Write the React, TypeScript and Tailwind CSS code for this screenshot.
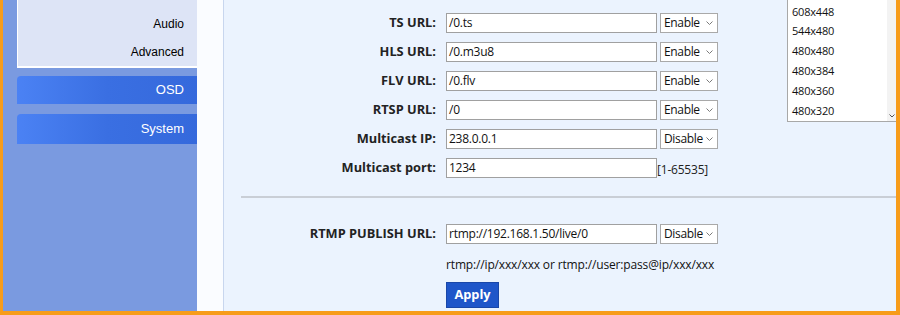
import React from "react";

const font = { fontFamily: '"Open Sans", "Noto Sans", sans-serif' };

function Chevron() {
  return (
    <svg width="7" height="4" viewBox="0 0 7 4" className="shrink-0">
      <path d="M0.5 0.5 L3.5 3.5 L6.5 0.5" fill="none" stroke="#7a7a7a" strokeWidth="1" />
    </svg>
  );
}

function Select({ value }: { value: string }) {
  return (
    <div className="w-[58px] h-[20px] border border-[#a9a9a9] bg-white flex items-center justify-between pl-[3px] pr-[4px] text-[12px] tracking-[-0.35px] text-[#111]">
      <span>{value}</span>
      <Chevron />
    </div>
  );
}

function Input({ value }: { value: string }) {
  return (
    <div className="w-[211px] h-[20px] border border-[#a0a0a0] bg-white flex items-center pl-[2px] text-[12px] tracking-[-0.25px] text-[#111] leading-none">
      {value}
    </div>
  );
}

function Row({ label, value, right }: { label: string; value: string; right: React.ReactNode }) {
  return (
    <div className="flex items-center h-[20px]">
      <div className="w-[212px] text-right font-bold text-[12.8px] text-[#222]">{label}</div>
      <div className="ml-[10px]">
        <Input value={value} />
      </div>
      <div className="ml-[3px]">{right}</div>
    </div>
  );
}

export default function App() {
  const sizes = ["608x448", "544x480", "480x480", "480x384", "480x360", "480x320"];
  return (
    <div
      className="w-[900px] h-[315px] overflow-hidden flex border-l-[3px] border-r-[4px] border-b-[4px] border-[#f79c1a] relative"
      style={font}
    >
      {/* Sidebar */}
      <div
        className="w-[194px] h-full bg-[#7a9ae0] pl-[14px] flex flex-col"
        style={{ fontFamily: '"Liberation Sans", Arial, sans-serif' }}
      >
        <div className="mt-[-18px] bg-[#dde4f6] border-l border-b-2 border-white flex flex-col text-[12px] text-black">
          <div className="h-[28px] flex items-center justify-end pr-[13px]">Substream</div>
          <div className="h-[28px] flex items-center justify-end pr-[13px]">Audio</div>
          <div className="h-[28px] flex items-center justify-end pr-[13px]">Advanced</div>
        </div>
        <div className="mt-[8px] h-[28px] rounded-tl-[4px] bg-gradient-to-r from-[#4b82f4] via-[#3a6fe2] to-[#3569dc] flex items-center justify-end pr-[13px] text-white text-[13px]">
          OSD
        </div>
        <div className="mt-[10px] h-[30px] rounded-tl-[4px] bg-gradient-to-r from-[#4b82f4] via-[#3a6fe2] to-[#3569dc] flex items-center justify-end pr-[13px] text-white text-[13px]">
          System
        </div>
      </div>

      {/* strip */}
      <div className="w-[27px] h-full bg-[#fafcff] border-r border-[#c8d6ee]" />

      {/* Main */}
      <div className="flex-1 h-full bg-[#ebf3fe] flex flex-col">
        <div className="mt-[13px] flex flex-col gap-[9px]">
          <Row label="TS URL:" value="/0.ts" right={<Select value="Enable" />} />
          <Row label="HLS URL:" value="/0.m3u8" right={<Select value="Enable" />} />
          <Row label="FLV URL:" value="/0.flv" right={<Select value="Enable" />} />
          <Row label="RTSP URL:" value="/0" right={<Select value="Enable" />} />
          <Row label="Multicast IP:" value="238.0.0.1" right={<Select value="Disable" />} />
          <Row
            label="Multicast port:"
            value="1234"
            right={<span className="text-[12px] tracking-[-0.2px] text-[#222] ml-[-3px]">[1-65535]</span>}
          />
        </div>
        <div className="mt-[18px] ml-[17px] h-[2px] bg-[#c9ced6]" />
        <div className="mt-[26px]">
          <Row label="RTMP PUBLISH URL:" value="rtmp://192.168.1.50/live/0" right={<Select value="Disable" />} />
        </div>
        <div className="mt-[12px] ml-[222px] h-[18px] flex items-center text-[12px] tracking-[-0.15px] text-[#111]">
          rtmp://ip/xxx/xxx or rtmp://user:pass@ip/xxx/xxx
        </div>
        <div className="mt-[8px] ml-[222px]">
          <button className="w-[53px] h-[26px] bg-[#1f56c9] border border-[#1a47a8] text-white font-bold text-[12.8px] flex items-center justify-center">
            Apply
          </button>
        </div>
      </div>

      {/* Dropdown list overlay */}
      <div className="absolute left-[784px] top-0 w-[109px] h-[122px] bg-white border-l border-b border-[#a8a8a8] flex">
        <div className="flex-1 flex flex-col pt-[2px] pl-[4px] text-[11px] tracking-[-0.2px] text-[#111]">
          {sizes.map((s) => (
            <div key={s} className="h-[20px] flex items-center">
              {s}
            </div>
          ))}
        </div>
        <div className="w-[9px] h-full bg-[#f3f3f3] flex flex-col justify-end items-center pb-[3px]">
          <svg width="6" height="4" viewBox="0 0 6 4">
            <path d="M0.5 0.5 L3 3 L5.5 0.5" fill="none" stroke="#555" strokeWidth="1" />
          </svg>
        </div>
      </div>
    </div>
  );
}
